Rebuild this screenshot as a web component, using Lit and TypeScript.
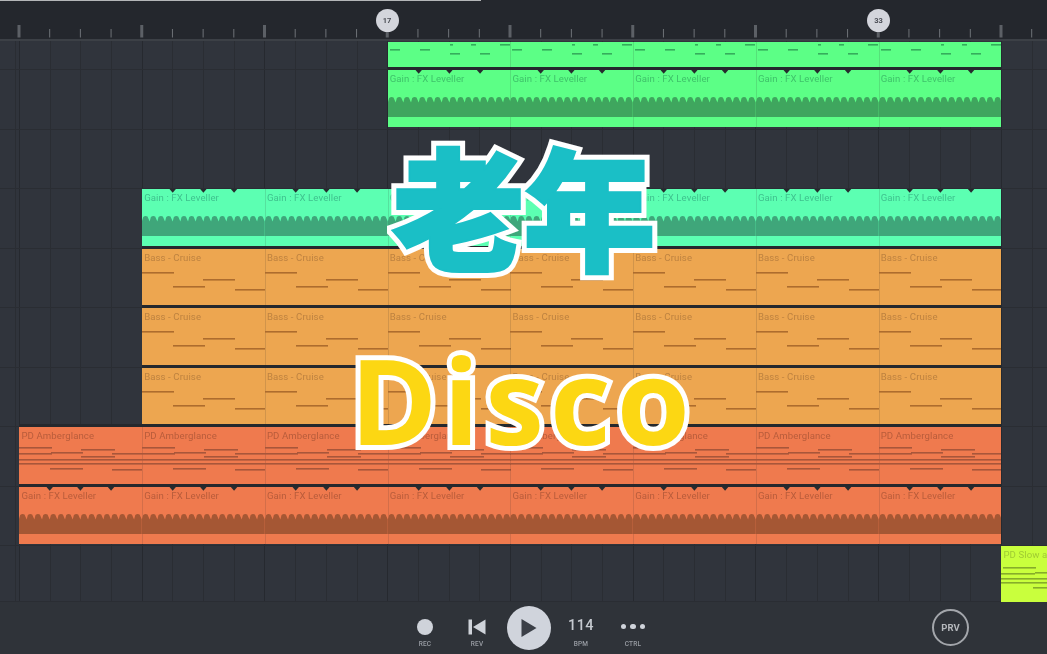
import { LitElement, html, css, svg } from "lit";
import { customElement } from "lit/decorators.js";

const X0 = 19.4;
const BAR = 122.75;
const BEAT = BAR / 4;

type Kind = "dash" | "gain" | "bass" | "amber" | "lime";
interface Clip {
  start: number;
  bars: number;
  kind: Kind;
  tone: string;
  label: string;
  gap: boolean;
}
interface Track {
  height: number;
  clipHeight: number;
  clip: Clip;
}

const NOTES: Record<string, [number, number, number][]> = {
  dash: [
    [2, 7, 10], [32, 7, 10], [62, 11, 10], [92, 11, 10],
    [62, 2, 3], [83, 2, 5], [112, 2, 10],
  ],
  bass: [[0, 23, 32], [31, 37, 32], [61, 30, 32], [93, 40, 30]],
  amber: [
    [0, 20, 33], [0, 26, 33], [32, 25, 32], [62, 22, 34], [93, 26, 30],
    [0, 32, 123], [0, 36, 123], [62, 29, 34], [31, 41, 33], [93, 42, 30],
  ],
  lime: [[2, 21, 33], [0, 27, 34], [34, 26, 12], [0, 32, 46], [0, 36, 46], [32, 41, 14]],
};

const wavePath = (() => {
  const n = 16;
  const w = BAR / n;
  let d = "M0 47 L0 32";
  for (let i = 0; i < n; i++) {
    const x = i * w;
    d += ` L${(x + 1.2).toFixed(2)} 28 Q${(x + 3.2).toFixed(2)} 26.4 ${(x + 5.5).toFixed(2)} 27.5 L${(x + w).toFixed(2)} 32.5`;
  }
  return d + ` L${BAR} 47 Z`;
})();

@customElement("pattern-bar")
class PatternBar extends LitElement {
  static properties = {
    kind: { type: String },
    label: { type: String },
  };
  kind: Kind = "bass";
  label = "";

  static styles = css`
    :host {
      display: block;
      position: relative;
      flex: 0 0 122.75px;
      width: 122.75px;
      height: 100%;
    }
    :host(.divided) {
      box-shadow: inset 1px 0 0 rgba(40, 40, 40, 0.14);
    }
    svg {
      position: absolute;
      left: 0;
      top: 0;
      width: 122.75px;
      height: 57px;
      overflow: visible;
    }
    .name {
      position: relative;
      display: block;
      padding: 3px 0 0 2px;
      font: 9.6px/12px Roboto, "Liberation Sans", sans-serif;
      letter-spacing: 0.1px;
      color: var(--ink);
      white-space: nowrap;
    }
  `;

  render() {
    const notes = NOTES[this.kind] ?? [];
    return html`
      <svg viewBox="0 0 122.75 57" aria-hidden="true">
        ${this.kind === "gain"
          ? svg`<path d=${wavePath} fill="var(--wave)"></path>
              ${[1, 2, 3].map(
                (i) => svg`<path d="M${i * BEAT - 3.2} 0 h6.4 l-3.2 3.8 z" fill="#262b2e"></path>`
              )}`
          : notes.map(
              ([x, y, w]) =>
                svg`<rect x=${x} y=${y} width=${w} height="1.6" fill="var(--ink-note)"></rect>`
            )}
      </svg>
      ${this.label ? html`<span class="name">${this.label}</span>` : ""}
    `;
  }
}

const gainLabel = "Gain : FX Leveller";
const TRACKS: Track[] = [
  { height: 29, clipHeight: 25, clip: { start: 3, bars: 5, kind: "dash", tone: "green", label: "", gap: false } },
  { height: 59.5, clipHeight: 57, clip: { start: 3, bars: 5, kind: "gain", tone: "green", label: gainLabel, gap: true } },
  { height: 59.5, clipHeight: 0, clip: { start: 0, bars: 0, kind: "gain", tone: "green", label: "", gap: false } },
  { height: 59.5, clipHeight: 57, clip: { start: 1, bars: 7, kind: "gain", tone: "mint", label: gainLabel, gap: false } },
  { height: 59.5, clipHeight: 57, clip: { start: 1, bars: 7, kind: "bass", tone: "orange", label: "Bass - Cruise", gap: true } },
  { height: 59.5, clipHeight: 57, clip: { start: 1, bars: 7, kind: "bass", tone: "orange", label: "Bass - Cruise", gap: true } },
  { height: 59.5, clipHeight: 57, clip: { start: 1, bars: 7, kind: "bass", tone: "orange", label: "Bass - Cruise", gap: true } },
  { height: 59.5, clipHeight: 57, clip: { start: 0, bars: 8, kind: "amber", tone: "red", label: "PD Amberglance", gap: true } },
  { height: 59.5, clipHeight: 57, clip: { start: 0, bars: 8, kind: "gain", tone: "red", label: gainLabel, gap: true } },
  { height: 56, clipHeight: 56, clip: { start: 8, bars: 1, kind: "lime", tone: "lime", label: "PD Slow a", gap: false } },
];

@customElement("app-root")
class AppRoot extends LitElement {
  static styles = css`
    :host {
      display: block;
      position: relative;
      width: 1047px;
      height: 654px;
      overflow: hidden;
      background: #2f333a;
      font-family: Roboto, "Liberation Sans", sans-serif;
    }
    .screen {
      display: flex;
      flex-direction: column;
      height: 654px;
      filter: blur(0.5px);
    }
    .ruler {
      position: relative;
      flex: 0 0 41px;
      height: 41px;
      background: #24272d;
      box-shadow: inset 0 -2px 0 #3c4046;
    }
    .progress {
      height: 1px;
      width: 481px;
      background: #b4b6b8;
    }
    .ruler svg {
      position: absolute;
      inset: 0;
      width: 1047px;
      height: 41px;
    }
    .marker {
      position: absolute;
      top: 9px;
      width: 23px;
      height: 23px;
      margin-left: -11.5px;
      border-radius: 50%;
      background: #d3d5dc;
      color: #4a4d55;
      font-size: 7.5px;
      font-weight: 700;
      line-height: 23px;
      text-align: center;
    }
    .m17 { left: 387px; }
    .m33 { left: 878.5px; }
    .tracks {
      flex: 0 0 561px;
      height: 561px;
      overflow: hidden;
      background-color: #30343c;
      background-image:
        repeating-linear-gradient(90deg, #26292f 0 1px, transparent 1px 122.75px),
        repeating-linear-gradient(90deg, #2a2d33 0 1px, transparent 1px 30.6875px);
      background-position: 19px 0, 19px 0;
    }
    .track {
      box-sizing: border-box;
      display: flex;
      align-items: flex-start;
      box-shadow: inset 0 -1px 0 #2a2d33;
    }
    .track:first-child {
      padding-top: 1px;
    }
    .clip {
      display: flex;
      overflow: hidden;
      flex: none;
    }
    .clip.gap {
      box-shadow: 0 -3px 0 #25282d;
    }
    .green { background: #5cff86; --ink: #3fc26a; --ink-note: #35ad5c; --wave: #3fa65e; }
    .mint { background: #5cffb2; --ink: #3fc28e; --ink-note: #35ad80; --wave: #3fa67a; }
    .orange { background: #eda650; --ink: #bd8240; --ink-note: #ad6c2e; --wave: #a56a30; }
    .red { background: #ef7a4e; --ink: #b85c3b; --ink-note: #a8563a; --wave: #a55734; }
    .lime { background: #c9ff3d; --ink: #a0cc33; --ink-note: #86ad2a; --wave: #8fb02a; }
    .transport {
      flex: 1;
      display: flex;
      align-items: stretch;
      padding-left: 399px;
      background: #2f3339;
    }
    .item {
      flex: 0 0 52px;
      display: flex;
      flex-direction: column;
      align-items: center;
      color: #c9cdd4;
    }
    .glyph {
      height: 27px;
      margin-top: 11px;
      display: flex;
      align-items: center;
      justify-content: center;
    }
    .label {
      font-size: 6.5px;
      line-height: 8px;
      letter-spacing: 0.2px;
      color: #9a9ea5;
      font-weight: 500;
    }
    .rec {
      width: 16px;
      height: 16px;
      border-radius: 50%;
      background: #cfd3da;
    }
    .play {
      width: 44px;
      height: 44px;
      margin-top: 4px;
      border-radius: 50%;
      background: #d0d4dc;
      display: flex;
      align-items: center;
      justify-content: center;
    }
    .bpm {
      font-size: 14.5px;
      font-weight: 500;
      letter-spacing: 0.4px;
      color: #c6cad0;
      margin-bottom: 3px;
    }
    .dots {
      display: flex;
      gap: 4px;
    }
    .dots i {
      width: 5.5px;
      height: 5.5px;
      border-radius: 50%;
      background: #cfd3da;
    }
    .prv {
      box-sizing: border-box;
      width: 37px;
      height: 37px;
      margin: 7px 0 0 273px;
      border: 2px solid #a3a6ab;
      border-radius: 50%;
      color: #b5b8bc;
      font-size: 9.5px;
      font-weight: 700;
      line-height: 33px;
      text-align: center;
    }
    .title {
      position: absolute;
      white-space: nowrap;
      paint-order: stroke fill;
      filter: blur(0.3px);
    }
    .title::after {
      content: attr(data-text);
      position: absolute;
      left: 0;
      top: 0;
      paint-order: stroke fill;
    }
    .old {
      left: 393px;
      top: 123px;
      font: 900 131px/160px "Noto Sans CJK SC", "Noto Sans CJK JP", sans-serif;
      color: #1abfc6;
      -webkit-text-stroke: 14px #ffffff;
      stroke-linejoin: miter;
    }
    .old::after {
      -webkit-text-stroke: 4px #1abfc6;
    }
    .disco {
      left: 350px;
      top: 320px;
      font: 700 118px/160px "Open Sans", "Noto Sans", sans-serif;
      letter-spacing: 6px;
      color: #fcd713;
      -webkit-text-stroke: 10px #ffffff;
    }
    .disco::after {
      -webkit-text-stroke: 0;
    }
  `;

  private rulerMarks() {
    const marks = [];
    for (let i = 0; i < 34; i++) {
      const x = X0 - 0.4 + i * BEAT;
      if (i % 4 === 0) {
        marks.push(svg`<rect x=${x - 1.5} y="25" width="3" height="12.5" fill="#5c6066"></rect>`);
      } else {
        marks.push(svg`<rect x=${x - 0.5} y="29" width="1" height="8.5" fill="#6e7278"></rect>`);
      }
    }
    return marks;
  }

  private renderClip(t: Track) {
    const c = t.clip;
    if (!c.bars) return "";
    const x = X0 + c.start * BAR;
    const width = c.kind === "lime" ? 1047 - x : c.bars * BAR;
    return html`
      <div
        class="clip ${c.tone} ${c.gap ? "gap" : ""}"
        style="margin-left:${x}px;width:${width}px;height:${t.clipHeight}px"
      >
        ${Array.from({ length: c.bars }, (_, i) => html`
          <pattern-bar class=${i ? "divided" : ""} .kind=${c.kind} .label=${c.label}></pattern-bar>
        `)}
      </div>
    `;
  }

  render() {
    return html`
      <div class="screen">
        <header class="ruler">
          <div class="progress"></div>
          <svg aria-hidden="true">${this.rulerMarks()}</svg>
          <span class="marker m17">17</span>
          <span class="marker m33">33</span>
        </header>
        <main class="tracks">
          ${TRACKS.map(
            (t) => html`<div class="track" style="height:${t.height}px">${this.renderClip(t)}</div>`
          )}
        </main>
        <footer class="transport">
          <div class="item"><div class="glyph"><div class="rec"></div></div><span class="label">REC</span></div>
          <div class="item">
            <div class="glyph">
              <svg width="18" height="16" viewBox="0 0 18 16" aria-hidden="true">
                <rect x="0.5" y="0.5" width="3.5" height="15" fill="#cfd3da"></rect>
                <path d="M17.5 0.5 V15.5 L5 8 Z" fill="#cfd3da"></path>
              </svg>
            </div>
            <span class="label">REV</span>
          </div>
          <div class="item">
            <div class="play">
              <svg width="18" height="20" viewBox="0 0 18 20" aria-hidden="true">
                <path d="M1.5 1 L16.5 10 L1.5 19 Z" fill="#3b3f47"></path>
              </svg>
            </div>
          </div>
          <div class="item">
            <div class="glyph"><span class="bpm">114</span></div>
            <span class="label">BPM</span>
          </div>
          <div class="item">
            <div class="glyph"><div class="dots"><i></i><i></i><i></i></div></div>
            <span class="label">CTRL</span>
          </div>
          <div class="prv">PRV</div>
        </footer>
      </div>
      <div class="title old" data-text="老年">老年</div>
      <div class="title disco">Disco</div>
    `;
  }
}
